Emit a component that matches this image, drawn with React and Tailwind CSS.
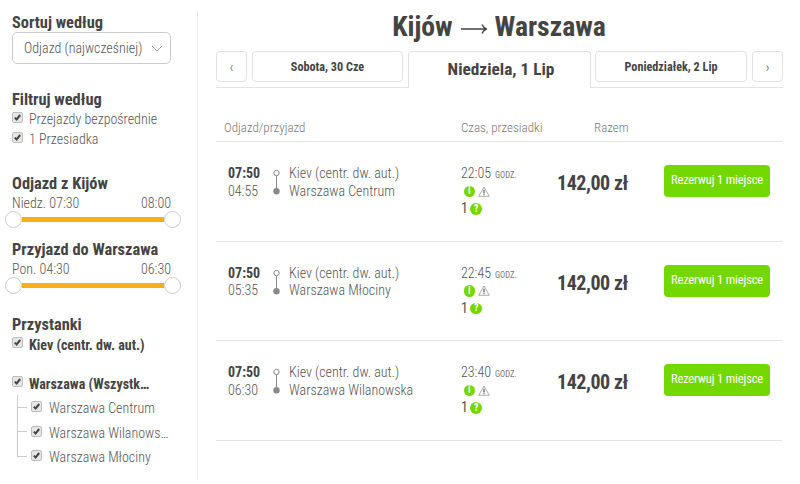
import { clsx } from "clsx";

const DAYS = ["Sobota, 30 Cze", "Niedziela, 1 Lip", "Poniedziałek, 2 Lip"];

const RIDES = [
  { start: "07:50", end: "04:55", from: "Kiev (centr. dw. aut.)", to: "Warszawa Centrum", time: "22:05", price: "142,00 zł" },
  { start: "07:50", end: "05:35", from: "Kiev (centr. dw. aut.)", to: "Warszawa Młociny", time: "22:45", price: "142,00 zł" },
  { start: "07:50", end: "06:30", from: "Kiev (centr. dw. aut.)", to: "Warszawa Wilanowska", time: "23:40", price: "142,00 zł" },
];

const STOPS = ["Warszawa Centrum", "Warszawa Wilanows…", "Warszawa Młociny"];

const Heading = ({ children }) => (
  <h3 className="h-5 pt-px text-[16.4px] leading-5 font-bold text-[#444]">{children}</h3>
);

const Check = () => (
  <svg className="size-[11px] shrink-0" viewBox="0 0 11 11">
    <rect x="0.5" y="0.5" width="10" height="10" rx="1.5" fill="#e6e6e6" stroke="#bdbdbd" />
    <path d="M2.8 5.6 4.6 7.4 8.2 3" fill="none" stroke="#444" strokeWidth="2" />
  </svg>
);

const CheckRow = ({ label, bold }) => (
  <label className="flex h-[19.5px] gap-[6px] leading-5">
    <span className="pt-[3px]"><Check /></span>
    <span className={clsx("text-[14px]", bold ? "pt-px font-bold text-[#444]" : "font-light text-[#555]")}>{label}</span>
  </label>
);

const Range = ({ title, from, to }) => (
  <div>
    <Heading>{title}</Heading>
    <div className="flex h-[18px] justify-between pt-px text-[14px] leading-[18px] font-light text-[#555]">
      <span>{from}</span>
      <span>{to}</span>
    </div>
    <div className="-ml-[7.5px] flex h-[17px] w-[176px] items-center">
      <span className="size-[17px] rounded-full border border-[#ccc] bg-white" />
      <span className="h-[5px] flex-1 bg-[#f6af15]" />
      <span className="size-[17px] rounded-full border border-[#ccc] bg-white" />
    </div>
  </div>
);

const Sidebar = () => (
  <aside className="mt-3 h-[468px] w-[198px] shrink-0 border-r border-[#ebebeb] pl-3">
    <div className="w-[159px] whitespace-nowrap">
      <Heading>Sortuj według</Heading>
      <div className="flex h-8 items-center justify-between rounded-[5px] border border-[#ccc] pr-[7px] pl-[11px]">
        <span className="text-[14px] leading-5 font-light text-[#555]">Odjazd (najwcześniej)</span>
        <svg className="h-[7px] w-[12px]" viewBox="0 0 12 7">
          <path d="M1 1 6 6 11 1" fill="none" stroke="#999" strokeWidth="0.9" />
        </svg>
      </div>

      <div className="mt-[25px]">
        <Heading>Filtruj według</Heading>
        <CheckRow label="Przejazdy bezpośrednie" />
        <CheckRow label="1 Przesiadka" />
      </div>

      <div className="mt-[25px]">
        <Range title="Odjazd z Kijów" from="Niedz. 07:30" to="08:00" />
      </div>
      <div className="mt-[11px]">
        <Range title="Przyjazd do Warszawa" from="Pon. 04:30" to="06:30" />
      </div>

      <div className="mt-5">
        <Heading>Przystanki</Heading>
        <CheckRow label="Kiev (centr. dw. aut.)" bold />
        <div className="mt-[19px]">
          <CheckRow label="Warszawa (Wszystk…" bold />
        </div>
        <div className="mt-[3px]">
          {STOPS.map((stop, i) => (
            <div key={stop} className="flex h-[24.5px] items-center pl-[5px] text-[14px] font-light text-[#555]">
              <span className={clsx("w-px bg-[#ccc]", i === STOPS.length - 1 ? "mb-[12px] h-[12.5px]" : "h-full")} />
              <span className="h-px w-[9px] bg-[#ccc]" />
              <span className="mr-[7px] ml-[4px] pb-px"><Check /></span>
              <span className="pt-[3px]">{stop}</span>
            </div>
          ))}
        </div>
      </div>
    </div>
  </aside>
);

const DayTabs = () => (
  <div className="flex h-[37px] text-[#444]">
    <div className="flex w-[192px] gap-[5px] border-b border-[#e4e4e4]">
      <button className="h-[31px] w-[31px] rounded-[4px] border border-[#e2e2e2] text-[15px] leading-[31px] font-light text-[#555]">‹</button>
      <button className="h-[31px] w-[151px] rounded-[4px] border border-[#e2e2e2] pt-px text-[12.2px] font-bold">{DAYS[0]}</button>
    </div>
    <button className="w-[183px] rounded-t-[4px] border border-b-0 border-[#e2e2e2] pl-[3px] text-[17.3px] font-bold">{DAYS[1]}</button>
    <div className="flex w-[192px] gap-[5px] border-b border-[#e4e4e4] pl-[4px]">
      <button className="h-[31px] w-[152px] rounded-[4px] border border-[#e2e2e2] pt-px text-[12.2px] font-bold">{DAYS[2]}</button>
      <button className="h-[31px] w-[31px] rounded-[4px] border border-[#e2e2e2] text-[15px] leading-[31px] font-light text-[#555]">›</button>
    </div>
  </div>
);

const Badge = ({ children }) => (
  <span className="flex size-[11.5px] items-center justify-center rounded-full bg-[#73d700] text-[10px] leading-none font-bold text-white">
    {children}
  </span>
);

const Warning = () => (
  <svg className="h-[11px] w-[12px]" viewBox="0 0 12 11">
    <path d="M6 1 11.3 10.3H0.7Z" fill="none" stroke="#888" strokeWidth="0.7" />
    <path d="M6 3.8V7.4M6 8.3V9.3" stroke="#444" strokeWidth="1.1" />
  </svg>
);

const Ride = ({ ride }) => (
  <div className="flex h-[99.6px] w-[566px] border-b border-[#e4e4e4] pt-[23px] pl-3 text-[14px] leading-[17.5px] font-light text-[#555]">
    <div className="w-[45px]">
      <div className="font-bold text-[#444]">{ride.start}</div>
      <div>{ride.end}</div>
    </div>
    <svg className="mt-[4px] h-[27px] w-[7px]" viewBox="0 0 7 27">
      <circle cx="3.5" cy="4" r="2.7" fill="#fff" stroke="#888" />
      <path d="M3.5 6.7V20" stroke="#888" />
      <circle cx="3.5" cy="22.3" r="3.2" fill="#888" />
    </svg>
    <div className="ml-[9px] w-[172px]">
      <div>{ride.from}</div>
      <div>{ride.to}</div>
    </div>
    <div className="w-[96px]">
      <div className="flex h-[17.5px] items-baseline gap-1">
        {ride.time}
        <span className="text-[8.5px] font-normal text-[#777]">GODZ.</span>
      </div>
      <div className="flex h-[17.5px] items-center gap-[2.5px] pl-[2.5px]">
        <Badge>i</Badge>
        <Warning />
      </div>
      <div className="flex h-[17.5px] items-center gap-[2.5px] font-normal">
        1<Badge>?</Badge>
      </div>
    </div>
    <div className="w-[107px] pt-[8px] text-[20px] leading-[20px] font-bold tracking-[-0.45px] text-[#444]">{ride.price}</div>
    <button className="h-[32px] w-[106px] rounded-[4px] bg-[#73d700] pb-[2px] text-[12.5px] font-normal tracking-[-0.15px] text-white">
      Rezerwuj 1 miejsce
    </button>
  </div>
);

export default function App() {
  return (
    <div className="flex h-[484px] w-[800px] overflow-hidden bg-white font-['Roboto_Condensed',Roboto,sans-serif] whitespace-nowrap [font-stretch:75%]">
      <Sidebar />
      <main className="w-[585px] pl-[18px]">
        <h1 className="mt-[9px] flex h-[36px] items-center justify-center gap-2 pr-px text-[27.7px] font-bold text-[#444]">
          Kijów
          <svg className="mt-[3px] h-[12px] w-[26px]" viewBox="0 0 26 12">
            <path d="M0 6H25M21 1.5Q22.5 4.8 25.5 6 22.5 7.2 21 10.5" fill="none" stroke="#444" strokeWidth="1.4" />
          </svg>
          Warszawa
        </h1>
        <div className="mt-[6px]">
          <DayTabs />
        </div>
        <div className="flex h-[54px] border-b border-[#e4e4e4] pt-[30px] pl-2 text-[13px] leading-5 font-light text-[#777]">
          <span className="w-[237px]">Odjazd/przyjazd</span>
          <span className="w-[133px]">Czas, przesiadki</span>
          <span>Razem</span>
        </div>
        {RIDES.map((ride) => (
          <Ride key={ride.end} ride={ride} />
        ))}
      </main>
    </div>
  );
}
